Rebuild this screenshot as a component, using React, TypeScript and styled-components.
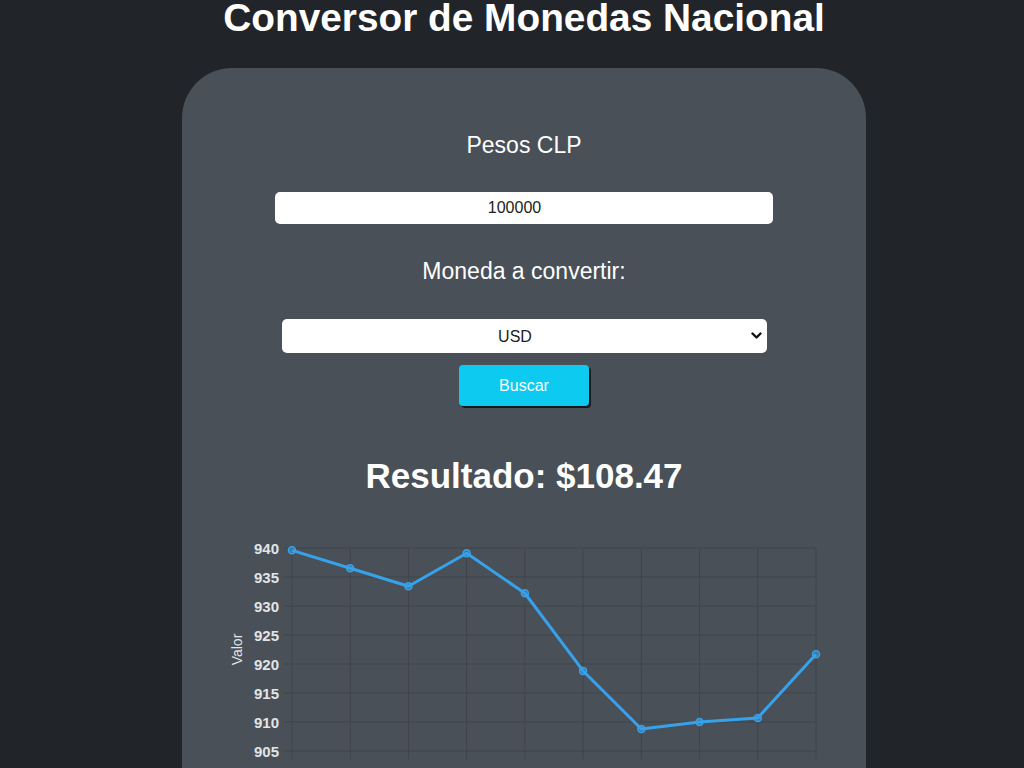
import React from "react";
import styled, { createGlobalStyle } from "styled-components";

const GlobalStyle = createGlobalStyle`
  html, body {
    margin: 0;
    padding: 0;
    background: #212529;
    font-family: "Liberation Sans", Arial, sans-serif;
    overflow: hidden;
  }
`;

const Page = styled.main`
  display: flex;
  flex-direction: column;
  align-items: center;
  padding-left: 24px;
  min-height: 768px;
`;

const Title = styled.h1`
  margin: 0;
  font-size: 38.8px;
  line-height: 36px;
  font-weight: 700;
  color: #ffffff;
  text-align: center;
`;

const Card = styled.section`
  margin-top: 32px;
  width: 684px;
  background: #495057;
  border-radius: 50px 50px 0 0;
  padding-top: 64px;
  display: flex;
  flex-direction: column;
  align-items: center;
  min-height: 720px;
  box-sizing: border-box;
`;

const Label = styled.label<{ $gap?: number }>`
  display: block;
  margin-top: ${(p) => p.$gap ?? 0}px;
  font-size: 23px;
  color: #ffffff;
  text-align: center;
`;

const AmountInput = styled.input`
  margin-top: 33px;
  width: 498px;
  height: 32px;
  box-sizing: border-box;
  border: none;
  border-radius: 5px;
  background: #ffffff;
  padding: 0 19px 0 0;
  font-family: "Liberation Sans", Arial, sans-serif;
  font-size: 16px;
  color: #222;
  text-align: center;
  outline: none;
`;

const SelectWrap = styled.div`
  position: relative;
  margin-top: 34px;
  width: 485px;
  height: 34px;
`;

const CurrencySelect = styled.select`
  width: 100%;
  height: 100%;
  appearance: none;
  -webkit-appearance: none;
  border: none;
  border-radius: 5px;
  background: #ffffff;
  padding: 0 18px 0 0;
  font-family: "Liberation Sans", Arial, sans-serif;
  font-size: 16px;
  color: #222;
  text-align: center;
  text-align-last: center;
  outline: none;
`;

const Chevron = styled.svg`
  position: absolute;
  right: 5px;
  top: 13px;
  pointer-events: none;
`;

const SearchButton = styled.button`
  margin-top: 12px;
  width: 130px;
  height: 41px;
  border: none;
  border-radius: 4px;
  background: #0dcaf0;
  box-shadow: 2px 2px 0 #15181b;
  color: #ffffff;
  font-family: "Liberation Sans", Arial, sans-serif;
  font-size: 16px;
  cursor: pointer;
`;

const Result = styled.h2`
  margin: 50px 0 0;
  font-size: 35px;
  font-weight: 700;
  line-height: normal;
  color: #ffffff;
  text-align: center;
`;

const ChartBox = styled.div`
  margin-top: 38px;
  width: 600px;
`;

const values = [939.6, 936.5, 933.4, 939.1, 932.2, 918.8, 908.8, 910.0, 910.7, 921.7];

const left = 68;
const right = 592;
const top = 14;
const bottom = 217;
const yMin = 905;
const yMax = 940;
const sx = (i: number) => left + ((right - left) * i) / (values.length - 1);
const sy = (v: number) => bottom - ((v - yMin) / (yMax - yMin)) * (bottom - top);

const ticks = [940, 935, 930, 925, 920, 915, 910, 905];

function Chart() {
  const grid = "#40454c";
  const pts = values.map((v, i) => `${sx(i)},${sy(v)}`).join(" ");
  return (
    <svg width={600} height={240} viewBox="0 0 600 240">
      {ticks.map((t) => (
        <line key={`h${t}`} x1={left - 8} x2={right} y1={sy(t)} y2={sy(t)} stroke={grid} strokeWidth={1} />
      ))}
      {values.map((_, i) => (
        <line key={`v${i}`} x1={sx(i)} x2={sx(i)} y1={top} y2={bottom + 8} stroke={grid} strokeWidth={1} />
      ))}
      {ticks.map((t) => (
        <text
          key={`t${t}`}
          x={55}
          y={sy(t) + 5.5}
          textAnchor="end"
          fontFamily="Liberation Sans, Arial, sans-serif"
          fontSize={15}
          fontWeight={700}
          fill="#e2e4e6"
        >
          {t}
        </text>
      ))}
      <text
        x={0}
        y={0}
        transform={`translate(18 ${(top + bottom) / 2}) rotate(-90)`}
        textAnchor="middle"
        fontFamily="Liberation Sans, Arial, sans-serif"
        fontSize={14}
        fill="#e2e4e6"
      >
        Valor
      </text>
      <polyline points={pts} fill="none" stroke="#36a2eb" strokeWidth={3} strokeLinejoin="round" />
      {values.map((v, i) => (
        <circle key={`p${i}`} cx={sx(i)} cy={sy(v)} r={3.5} fill="rgba(54,162,235,0.5)" stroke="#36a2eb" strokeWidth={1.5} />
      ))}
    </svg>
  );
}

export default function App() {
  return (
    <>
      <GlobalStyle />
      <Page>
        <Title>Conversor de Monedas Nacional</Title>
        <Card>
          <Label htmlFor="clp">Pesos CLP</Label>
          <AmountInput id="clp" type="text" defaultValue="100000" />
          <Label htmlFor="moneda" $gap={34}>Moneda a convertir:</Label>
          <SelectWrap>
            <CurrencySelect id="moneda" defaultValue="USD">
              <option value="USD">USD</option>
              <option value="EUR">EUR</option>
              <option value="UF">UF</option>
            </CurrencySelect>
            <Chevron width="11" height="8" viewBox="0 0 11 8">
              <polyline points="1.5,1.5 5.5,5.5 9.5,1.5" fill="none" stroke="#111" strokeWidth="2.4" strokeLinecap="round" strokeLinejoin="round" />
            </Chevron>
          </SelectWrap>
          <SearchButton type="button">Buscar</SearchButton>
          <Result>Resultado: $108.47</Result>
          <ChartBox>
            <Chart />
          </ChartBox>
        </Card>
      </Page>
    </>
  );
}
